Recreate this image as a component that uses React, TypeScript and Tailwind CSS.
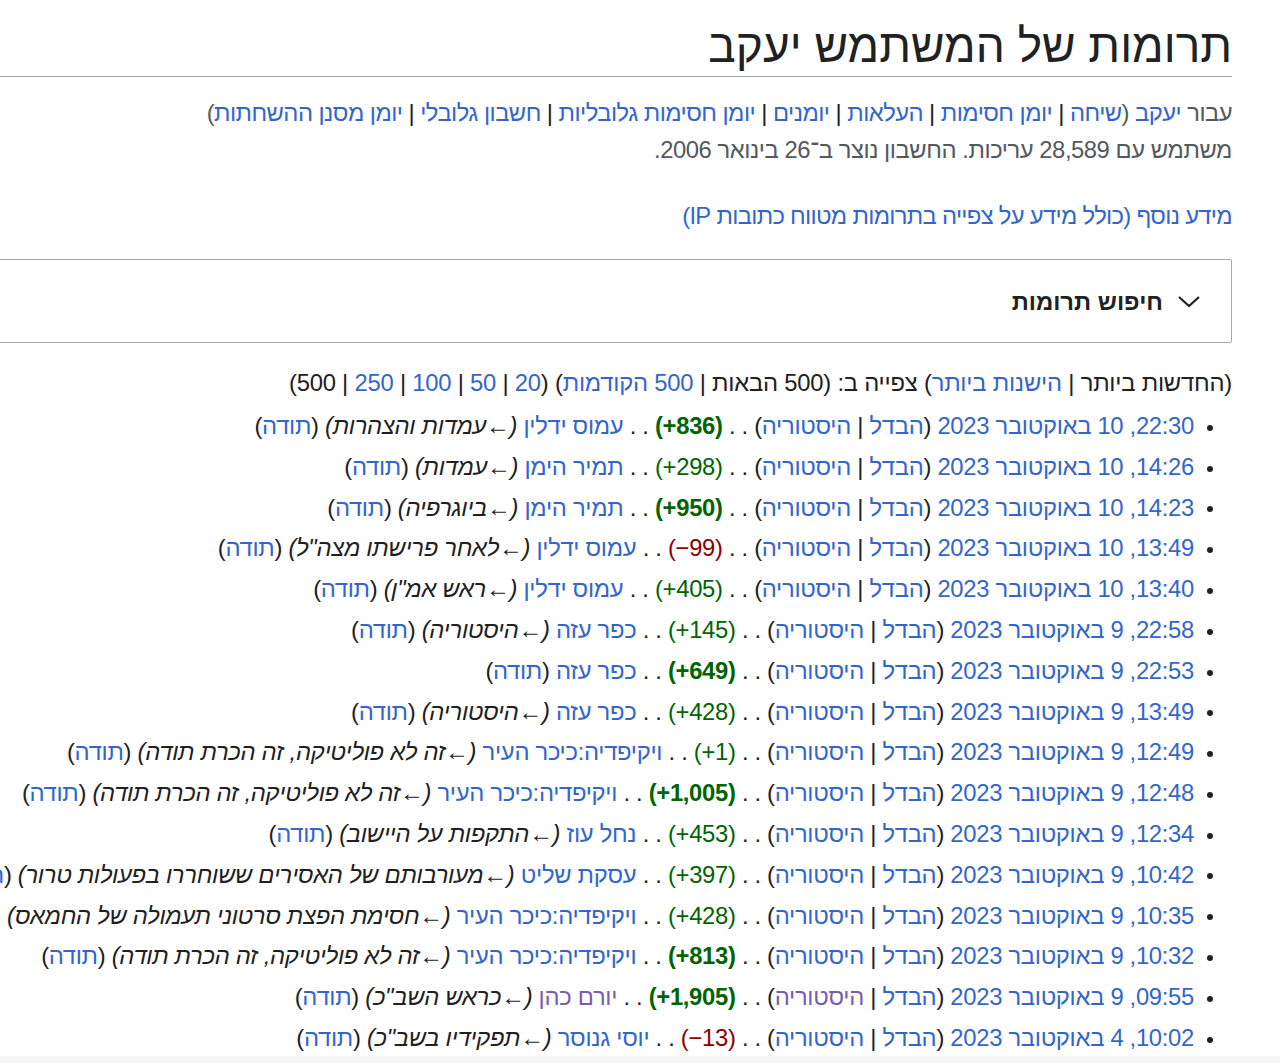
import React from "react";

type Row = {
  time: string;
  size: string;
  tone: "pos" | "neg";
  bold?: boolean;
  page: string;
  comment?: string;
  visited?: boolean;
};

const rows: Row[] = [
  { time: "22:30, 10 באוקטובר 2023", size: "+836", tone: "pos", bold: true, page: "עמוס ידלין", comment: "עמדות והצהרות" },
  { time: "14:26, 10 באוקטובר 2023", size: "+298", tone: "pos", page: "תמיר הימן", comment: "עמדות" },
  { time: "14:23, 10 באוקטובר 2023", size: "+950", tone: "pos", bold: true, page: "תמיר הימן", comment: "ביוגרפיה" },
  { time: "13:49, 10 באוקטובר 2023", size: "−99", tone: "neg", page: "עמוס ידלין", comment: "לאחר פרישתו מצה\"ל" },
  { time: "13:40, 10 באוקטובר 2023", size: "+405", tone: "pos", page: "עמוס ידלין", comment: "ראש אמ\"ן" },
  { time: "22:58, 9 באוקטובר 2023", size: "+145", tone: "pos", page: "כפר עזה", comment: "היסטוריה" },
  { time: "22:53, 9 באוקטובר 2023", size: "+649", tone: "pos", bold: true, page: "כפר עזה" },
  { time: "13:49, 9 באוקטובר 2023", size: "+428", tone: "pos", page: "כפר עזה", comment: "היסטוריה" },
  { time: "12:49, 9 באוקטובר 2023", size: "+1", tone: "pos", page: "ויקיפדיה:כיכר העיר", comment: "זה לא פוליטיקה, זה הכרת תודה" },
  { time: "12:48, 9 באוקטובר 2023", size: "+1,005", tone: "pos", bold: true, page: "ויקיפדיה:כיכר העיר", comment: "זה לא פוליטיקה, זה הכרת תודה" },
  { time: "12:34, 9 באוקטובר 2023", size: "+453", tone: "pos", page: "נחל עוז", comment: "התקפות על היישוב" },
  { time: "10:42, 9 באוקטובר 2023", size: "+397", tone: "pos", page: "עסקת שליט", comment: "מעורבותם של האסירים ששוחררו בפעולות טרור" },
  { time: "10:35, 9 באוקטובר 2023", size: "+428", tone: "pos", page: "ויקיפדיה:כיכר העיר", comment: "חסימת הפצת סרטוני תעמולה של החמאס" },
  { time: "10:32, 9 באוקטובר 2023", size: "+813", tone: "pos", bold: true, page: "ויקיפדיה:כיכר העיר", comment: "זה לא פוליטיקה, זה הכרת תודה" },
  { time: "09:55, 9 באוקטובר 2023", size: "+1,905", tone: "pos", bold: true, page: "יורם כהן", comment: "כראש השב\"כ", visited: true },
  { time: "10:02, 4 באוקטובר 2023", size: "−13", tone: "neg", page: "יוסי גנוסר", comment: "תפקידיו בשב\"כ" },
];

function A({ children, visited }: { children: React.ReactNode; visited?: boolean }) {
  return (
    <a href="#" className={visited ? "text-[#795cb2]" : "text-[#3366cc]"}>
      {children}
    </a>
  );
}

function Sep() {
  return <span className="text-[#202122]"> | </span>;
}

function ContribRow({ r }: { r: Row }) {
  const sizeCls =
    (r.tone === "pos" ? "text-[#006400]" : "text-[#8b0000]") + (r.bold ? " font-bold" : "");
  return (
    <li className="whitespace-nowrap leading-[40.8px]">
      <span className="inline-block w-[6px] h-[6px] rounded-full bg-[#202122] align-middle ml-[13px]" />
      <A>{r.time}</A> (<A>הבדל</A>
      <Sep />
      <A visited={r.visited}>היסטוריה</A>) . .{" "}
      <span dir="ltr" className={sizeCls}>
        ({r.size})
      </span>{" "}
      . . <A visited={r.visited}>{r.page}</A>
      {r.comment ? (
        <>
          {" "}
          <i className="text-[#202122]">(←{r.comment})</i>
        </>
      ) : null}{" "}
      (<A>תודה</A>)
    </li>
  );
}

export default function App() {
  return (
    <div
      className="w-[1280px] h-[1063px] overflow-hidden bg-white text-[#202122]"
      style={{ fontFamily: '"Liberation Sans", Arial, "DejaVu Sans", sans-serif' }}
    >
      <div dir="rtl" className="-ml-[300px] w-[1532px] text-[23.8px]">
        <h1 className="text-[46px] leading-[60px] pt-[16px] border-b border-[#a2a9b1] font-normal text-[#202122]">
          תרומות של המשתמש יעקב
        </h1>

        <div className="mt-[17px] leading-[37px] text-[#54595d]">
          <div className="tracking-[-0.55px]">
            עבור <A>יעקב</A> (<A>שיחה</A>
            <Sep />
            <A>יומן חסימות</A>
            <Sep />
            <A>העלאות</A>
            <Sep />
            <A>יומנים</A>
            <Sep />
            <A>יומן חסימות גלובליות</A>
            <Sep />
            <A>חשבון גלובלי</A>
            <Sep />
            <A>יומן מסנן ההשחתות</A>)
          </div>
          <div className="tracking-[-0.45px]">משתמש עם 28,589 עריכות. החשבון נוצר ב־26 בינואר 2006.</div>
        </div>

        <div className="mt-[29px] leading-[37px] tracking-[-0.7px]">
          <A>מידע נוסף (כולל מידע על צפייה בתרומות מטווח כתובות IP)</A>
        </div>

        <div className="mt-[25px] border border-[#a2a9b1] rounded-[2px] pt-[23px] pb-[22px] pr-[30px]">
          <div className="flex items-center gap-[14px] leading-[37px]">
            <svg width="24" height="14" viewBox="0 0 24 14" className="shrink-0">
              <path d="M2 2 L12 11 L22 2" fill="none" stroke="#202122" strokeWidth="2.2" />
            </svg>
            <span className="font-bold">חיפוש תרומות</span>
          </div>
        </div>

        <div className="mt-[21px] leading-[37px] whitespace-nowrap tracking-[-0.22px]">
          (החדשות ביותר
          <Sep />
          <A>הישנות ביותר</A>) צפייה ב: (500 הבאות
          <Sep />
          <A>500 הקודמות</A>) (<A>20</A>
          <Sep />
          <A>50</A>
          <Sep />
          <A>100</A>
          <Sep />
          <A>250</A>
          <Sep />
          500)
        </div>

        <ul className="mt-[5px] pr-[19px] tracking-[-0.3px]">
          {rows.map((r, i) => (
            <ContribRow key={i} r={r} />
          ))}
        </ul>
      </div>
      <div className="-mt-[3px] h-[20px] bg-[#f7f7f7]" />
    </div>
  );
}
